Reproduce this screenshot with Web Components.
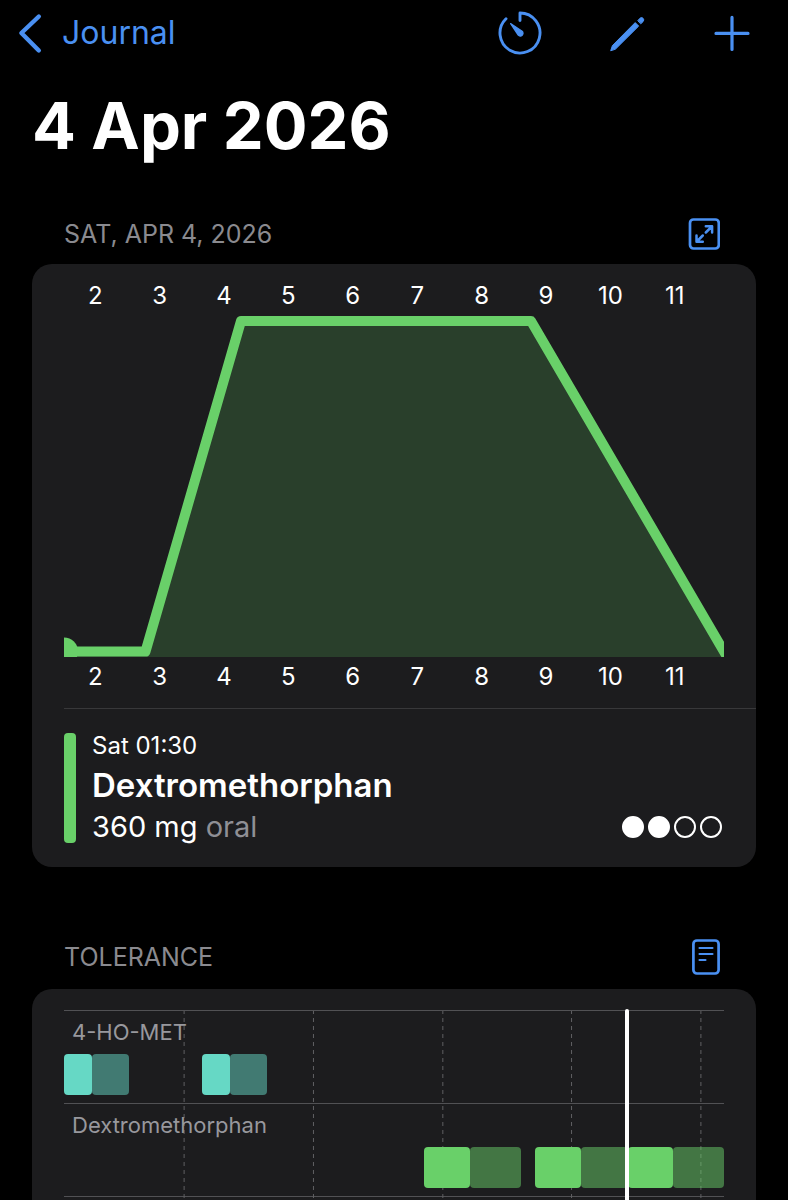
<!DOCTYPE html>
<html lang="en">
  <head>
    <meta charset="UTF-8" />
    <meta name="viewport" content="width=device-width, initial-scale=1.0" />
    <title>Journal</title>
    <style>
      body {
        margin: 0;
        background: #000;
        color: #fff;
        font-family: Inter, "Liberation Sans", sans-serif;
        --blue: #4a90f2;
        --card: #1c1c1e;
        --muted: #8a8a8f;
        --line: #515154;
      }
    </style>
  </head>
  <body>
    <template id="journal-page">
      <style>
        :host {
          display: block;
          box-sizing: border-box;
          height: 100vh;
          padding: 0 32px 32px;
          overflow-y: auto;
          scrollbar-width: none;
        }
        h1 {
          margin: 20px 0 38px;
          font-size: 65px;
          line-height: 80px;
          font-weight: 700;
        }
        main {
          display: flex;
          flex-direction: column;
          gap: 58px;
        }
      </style>
      <slot name="nav"></slot>
      <h1><slot name="title"></slot></h1>
      <main><slot></slot></main>
    </template>

    <template id="journal-nav">
      <style>
        :host {
          display: flex;
          align-items: center;
          justify-content: space-between;
          height: 66px;
          margin: 0 -16px;
          padding-right: 20px;
          color: var(--blue);
        }
        a {
          display: flex;
          align-items: center;
          gap: 18px;
          color: inherit;
          font-size: 32px;
          line-height: 40px;
          text-decoration: none;
        }
        .actions {
          display: flex;
          align-items: center;
          gap: 64px;
        }
        button {
          padding: 0;
          border: 0;
          background: none;
          color: inherit;
          cursor: pointer;
        }
        svg {
          display: block;
          fill: none;
          stroke: currentColor;
          stroke-linecap: round;
          stroke-linejoin: round;
        }
      </style>
      <a href="#journal">
        <svg width="28" height="42" viewBox="0 0 28 42" stroke-width="4.4">
          <path d="M22.8 4.5 5.4 21l17.4 17.5" />
        </svg>
        <slot></slot>
      </a>
      <div class="actions">
        <button aria-label="Timer">
          <svg width="48" height="48" viewBox="0 0 48 48" stroke-width="2.9">
            <path d="M24 11.5V4A20 20 0 1 1 10 9.7" />
            <path d="M14.6 14.6 26.2 22.2A2.6 2.6 0 1 1 22.2 26.2Z" fill="currentColor" stroke-width="1.2" />
          </svg>
        </button>
        <button aria-label="Edit">
          <svg width="40" height="40" viewBox="0 0 40 40" stroke-width="1">
            <path d="M2.8 37.4 4.4 32.6 27.2 9.6 30.7 13.1 7.6 36Z" fill="currentColor" />
            <path d="M30 7.4 31.9 5.3Q33.4 3.8 35 5.2 36.6 6.9 35.1 8.6L33 10.6Z" fill="currentColor" />
          </svg>
        </button>
        <button aria-label="Add">
          <svg width="40" height="40" viewBox="0 0 40 40" stroke-width="3.2">
            <path d="M20 4.4v32M4 20.4h32" />
          </svg>
        </button>
      </div>
    </template>

    <template id="journal-section">
      <style>
        :host {
          display: block;
        }
        header {
          display: flex;
          align-items: center;
          justify-content: space-between;
          padding: 14px 36px 14px 32px;
        }
        h2 {
          margin: 0;
          color: var(--muted);
          font-size: 25px;
          line-height: 32px;
          font-weight: 400;
        }
        .card {
          border-radius: 20px;
          background: var(--card);
          overflow: hidden;
        }
      </style>
      <header>
        <h2><slot name="title"></slot></h2>
        <slot name="action"></slot>
      </header>
      <div class="card"><slot></slot></div>
    </template>

    <template id="icon-button">
      <style>
        :host {
          display: block;
        }
        button {
          display: block;
          padding: 0;
          border: 0;
          background: none;
          color: var(--blue);
          cursor: pointer;
        }
        svg {
          display: block;
          fill: none;
          stroke: currentColor;
          stroke-linecap: round;
          stroke-linejoin: round;
        }
      </style>
      <button></button>
    </template>

    <template id="effect-chart">
      <style>
        :host {
          display: block;
          padding: 16px 32px 15px;
        }
        .hours {
          display: grid;
          grid-auto-flow: column;
          grid-auto-columns: 1fr;
          margin: 0 17px 0 -1px;
          font-size: 24px;
          line-height: 32px;
          text-align: center;
        }
        svg {
          display: block;
          width: 100%;
          margin: 3px 0 4px;
        }
      </style>
      <div class="hours"></div>
      <svg viewBox="0 0 660 342">
        <path d="M0 342V336.5H81.5L177 6H467L660 336.5V342Z" fill="#293f2b" />
        <path d="M-8 336.5H81.5L177 6H467L664 343.4" fill="none" stroke="#69d069" stroke-width="10" stroke-linejoin="round" />
        <circle cx="0" cy="336.5" r="14" fill="#69d069" />
      </svg>
      <div class="hours"></div>
    </template>

    <template id="dose-entry">
      <style>
        :host {
          display: flex;
          gap: 16px;
          margin-left: 32px;
          padding: 24px 34px 24px 0;
          border-top: 1px solid #38383a;
        }
        .bar {
          flex: none;
          width: 12px;
          border-radius: 4px;
          background: #69d069;
        }
        .text {
          display: flex;
          flex: 1;
          flex-direction: column;
          gap: 4px;
        }
        .time {
          font-size: 24px;
          line-height: 26px;
        }
        h3 {
          margin: 0;
          font-size: 33px;
          line-height: 44px;
          font-weight: 600;
        }
        .dose {
          display: flex;
          align-items: center;
          justify-content: space-between;
          font-size: 29px;
          line-height: 32px;
        }
        ::slotted([slot="route"]) {
          color: #8f8f95;
        }
        .dots {
          display: flex;
          gap: 4px;
        }
        .dots i {
          box-sizing: border-box;
          width: 22px;
          height: 22px;
          border: 2px solid #fff;
          border-radius: 50%;
        }
        .dots i.on {
          background: #fff;
        }
      </style>
      <div class="bar"></div>
      <div class="text">
        <div class="time"><slot name="time"></slot></div>
        <h3><slot></slot></h3>
        <div class="dose">
          <div><slot name="dose"></slot> <slot name="route"></slot></div>
          <div class="dots"></div>
        </div>
      </div>
    </template>

    <template id="tolerance-chart">
      <style>
        :host {
          display: block;
          padding: 21px 32px 32px;
        }
        .plot {
          position: relative;
          padding-bottom: 12px;
        }
        .rows {
          border-bottom: 1px solid var(--line);
        }
        svg {
          position: absolute;
          inset: 0;
          width: 100%;
          height: 100%;
        }
        .now {
          position: absolute;
          top: -1px;
          bottom: 0;
          left: 85%;
          width: 4px;
          border-radius: 2px;
          background: #fff;
        }
      </style>
      <div class="plot">
        <svg stroke="#606063" stroke-dasharray="4 4">
          <line x1="18.2%" x2="18.2%" y1="0" y2="100%" />
          <line x1="37.8%" x2="37.8%" y1="0" y2="100%" />
          <line x1="57.4%" x2="57.4%" y1="0" y2="100%" />
          <line x1="76.9%" x2="76.9%" y1="0" y2="100%" />
          <line x1="96.5%" x2="96.5%" y1="0" y2="100%" />
        </svg>
        <div class="rows"><slot></slot></div>
        <div class="now"></div>
      </div>
    </template>

    <template id="tolerance-row">
      <style>
        :host {
          display: block;
          position: relative;
          padding: 7px 0 8px;
          border-top: 1px solid var(--line);
        }
        .label {
          padding-left: 8px;
          color: #98989d;
          font-size: 22px;
          line-height: 28px;
        }
        .track {
          display: flex;
          height: 41px;
          margin-top: 8px;
        }
        .track i {
          border-radius: 4px;
          background: var(--bar);
        }
        .track i.half {
          opacity: 0.5;
        }
      </style>
      <div class="label"><slot></slot></div>
      <div class="track"></div>
    </template>

    <script>
      class BaseElement extends HTMLElement {
        constructor() {
          super();
          this.attachShadow({ mode: "open" }).appendChild(
            document.getElementById(this.localName).content.cloneNode(true)
          );
        }
      }

      class JournalPage extends BaseElement {}
      class JournalNav extends BaseElement {}
      class JournalSection extends BaseElement {}
      class ToleranceChart extends BaseElement {}

      const icons = {
        expand: `<svg width="32" height="32" viewBox="0 0 32 32" stroke-width="2.7">
          <rect x="2" y="1.5" width="28.8" height="29" rx="3.5" />
          <path d="M17.8 14.5 23.8 8.5M17.8 8.2H24.1V14.5M14.8 17.5 8.8 23.5M8.5 17.5V23.8H14.8" stroke-width="2.5" />
        </svg>`,
        document: `<svg width="28" height="36" viewBox="0 0 28 36" stroke-width="2.7">
          <rect x="1.4" y="1.5" width="25.2" height="33" rx="3.5" />
          <path d="M7.5 9h13M7.5 15h13M7.5 21h6" stroke-width="2.1" />
        </svg>`,
      };

      class IconButton extends BaseElement {
        connectedCallback() {
          const button = this.shadowRoot.querySelector("button");
          button.innerHTML = icons[this.getAttribute("icon")];
          button.setAttribute("aria-label", this.getAttribute("label"));
        }
      }

      class EffectChart extends BaseElement {
        connectedCallback() {
          const from = Number(this.getAttribute("from"));
          const to = Number(this.getAttribute("to"));
          this.shadowRoot.querySelectorAll(".hours").forEach((row) => {
            for (let hour = from; hour <= to; hour++) {
              const label = document.createElement("span");
              label.textContent = hour;
              row.appendChild(label);
            }
          });
        }
      }

      class DoseEntry extends BaseElement {
        connectedCallback() {
          const strength = Number(this.getAttribute("strength"));
          const dots = this.shadowRoot.querySelector(".dots");
          for (let i = 0; i < 4; i++) {
            const dot = document.createElement("i");
            dot.classList.toggle("on", i < strength);
            dots.appendChild(dot);
          }
        }
      }

      // bars="start full half, ..." in percent of the track width
      class ToleranceRow extends BaseElement {
        connectedCallback() {
          const track = this.shadowRoot.querySelector(".track");
          let end = 0;
          this.getAttribute("bars").split(",").forEach((bar) => {
            const [start, full, half] = bar.trim().split(" ").map(Number);
            const solid = document.createElement("i");
            solid.style.marginLeft = `${start - end}%`;
            solid.style.width = `${full}%`;
            const faded = document.createElement("i");
            faded.className = "half";
            faded.style.width = `${half}%`;
            track.append(solid, faded);
            end = start + full + half;
          });
        }
      }

      customElements.define("journal-page", JournalPage);
      customElements.define("journal-nav", JournalNav);
      customElements.define("journal-section", JournalSection);
      customElements.define("icon-button", IconButton);
      customElements.define("effect-chart", EffectChart);
      customElements.define("dose-entry", DoseEntry);
      customElements.define("tolerance-chart", ToleranceChart);
      customElements.define("tolerance-row", ToleranceRow);
    </script>

    <journal-page>
      <journal-nav slot="nav">Journal</journal-nav>
      <span slot="title">4 Apr 2026</span>

      <journal-section>
        <span slot="title">SAT, APR 4, 2026</span>
        <icon-button slot="action" icon="expand" label="Expand timeline"></icon-button>
        <effect-chart from="2" to="11"></effect-chart>
        <dose-entry strength="2">
          <span slot="time">Sat 01:30</span>
          Dextromethorphan
          <span slot="dose">360 mg</span>
          <span slot="route">oral</span>
        </dose-entry>
      </journal-section>

      <journal-section>
        <span slot="title">TOLERANCE</span>
        <icon-button slot="action" icon="document" label="Tolerance info"></icon-button>
        <tolerance-chart>
          <tolerance-row style="--bar: #66d8c5" bars="0 4.2 5.6, 20.9 4.2 5.6">4-HO-MET</tolerance-row>
          <tolerance-row style="--bar: #69d069" bars="54.5 7 7.7, 71.3 7 7.1, 85.4 6.9 7.7">Dextromethorphan</tolerance-row>
        </tolerance-chart>
      </journal-section>
    </journal-page>
  </body>
</html>
